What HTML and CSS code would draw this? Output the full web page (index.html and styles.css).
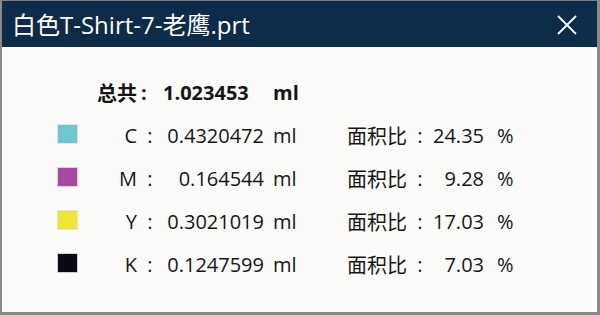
FILE: index.html
```html
<!DOCTYPE html>
<html lang="zh">
<head>
<meta charset="utf-8">
<link rel="stylesheet" href="styles.css">
</head>
<body>
<div class="window">
  <div class="titlebar">
    <span class="title">白色T-Shirt-7-老鹰.prt</span>
    <svg class="close" width="20" height="20" viewBox="0 0 20 20"><path d="M1 1 L19 19 M19 1 L1 19" stroke="#fff" stroke-width="1.8" fill="none"/></svg>
  </div>
  <div class="content">
    <div class="row total">
      <span class="sw"></span>
      <span class="lab">总共</span>
      <span class="colon">:</span>
      <span class="val">1.023453</span>
      <span class="unit">ml</span>
    </div>
    <div class="row">
      <span class="sw c"></span>
      <span class="lab">C</span>
      <span class="colon">:</span>
      <span class="val">0.4320472</span>
      <span class="unit">ml</span>
      <span class="alab">面积比</span>
      <span class="acolon">:</span>
      <span class="pct">24.35</span>
      <span class="punit">%</span>
    </div>
    <div class="row">
      <span class="sw m"></span>
      <span class="lab">M</span>
      <span class="colon">:</span>
      <span class="val">0.164544</span>
      <span class="unit">ml</span>
      <span class="alab">面积比</span>
      <span class="acolon">:</span>
      <span class="pct">9.28</span>
      <span class="punit">%</span>
    </div>
    <div class="row">
      <span class="sw y"></span>
      <span class="lab">Y</span>
      <span class="colon">:</span>
      <span class="val">0.3021019</span>
      <span class="unit">ml</span>
      <span class="alab">面积比</span>
      <span class="acolon">:</span>
      <span class="pct">17.03</span>
      <span class="punit">%</span>
    </div>
    <div class="row">
      <span class="sw k"></span>
      <span class="lab">K</span>
      <span class="colon">:</span>
      <span class="val">0.1247599</span>
      <span class="unit">ml</span>
      <span class="alab">面积比</span>
      <span class="acolon">:</span>
      <span class="pct">7.03</span>
      <span class="punit">%</span>
    </div>
  </div>
</div>
</body>
</html>
```

FILE: styles.css
```css
* { box-sizing: border-box; }
html, body { margin: 0; padding: 0; }
body {
  width: 600px;
  height: 315px;
  overflow: hidden;
  font-family: "Open Sans", "Noto Sans CJK SC", sans-serif;
  color: #161616;
}
.window {
  width: 600px;
  height: 315px;
  background: #fbfbf9;
  border-top: 1px solid #7d7d7d;
  border-left: 2px solid #8a8a8a;
  border-right: 3px solid #8a8a8a;
  border-bottom: 3px solid #8a8a8a;
  display: flex;
  flex-direction: column;
}
.titlebar {
  height: 46px;
  background: #0c2c4a;
  display: flex;
  align-items: center;
  justify-content: space-between;
  padding: 0 20px 0 10px;
  color: #fff;
}
.title {
  font-size: 24px;
  line-height: 1;
  margin-top: 2px;
}
.close { display: block; margin-top: 2px; }
.content {
  padding: 24px 0 0 56px;
  display: flex;
  flex-direction: column;
}
.row {
  display: flex;
  align-items: center;
  height: 43px;
  font-size: 20px;
}
.sw {
  width: 19px;
  height: 18px;
  flex: none;
  margin-top: -4px;
}
.sw.c { background: #6ec6d2; box-shadow: 0 0 0 1px #d8e6ee; }
.sw.m { background: #a64aa0; box-shadow: 0 0 0 1px #e4cfe2; }
.sw.y { background: #ece63a; box-shadow: 0 0 0 1px #e8e6c8; }
.sw.k { background: #0a0a12; box-shadow: 0 0 0 1px #cfcfd6; }
.lab {
  width: 60px;
  text-align: right;
  flex: none;
}
.colon {
  width: 26px;
  text-align: center;
  flex: none;
}
.val {
  width: 101px;
  text-align: right;
  flex: none;
}
.unit {
  width: 83px;
  padding-left: 9px;
  flex: none;
}
.alab {
  font-family: "Noto Sans CJK SC", sans-serif;
  width: 61px;
  flex: none;
}
.acolon {
  width: 24px;
  text-align: center;
  flex: none;
}
.pct {
  width: 52px;
  text-align: right;
  flex: none;
}
.punit {
  padding-left: 13px;
}
.total {
  font-weight: 700;
}
.total .lab { font-family: "Noto Sans CJK SC", sans-serif; }
.total .colon { text-align: left; padding-left: 4px; }
.total .val { text-align: left; }
```
